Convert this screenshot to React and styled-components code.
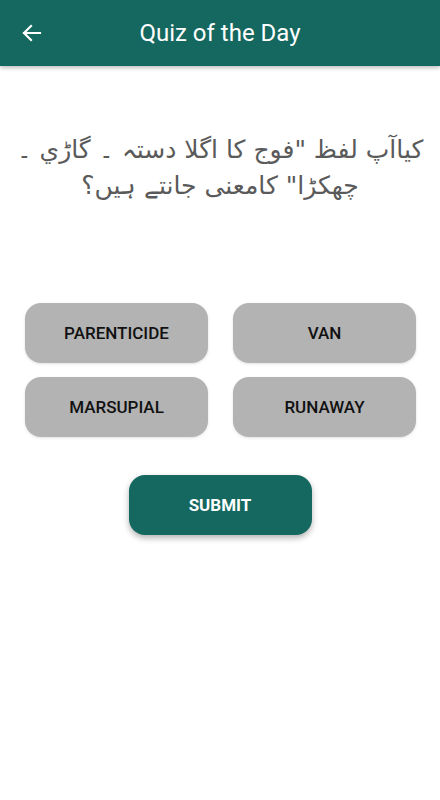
import styled, { createGlobalStyle } from 'styled-components';

const GlobalStyle = createGlobalStyle`
    html, body {
        margin: 0;
        padding: 0;
        background: #ffffff;
    }
    body {
        font-family: Roboto, "Liberation Sans", sans-serif;
    }
`;

const Screen = styled.div`
    width: 440px;
    min-height: 800px;
    display: flex;
    flex-direction: column;
    background: #ffffff;
`;

const Toolbar = styled.header`
    height: 66px;
    background: #14685f;
    display: flex;
    align-items: center;
    box-shadow: 0 2px 4px rgba(0, 0, 0, 0.25);
`;

const BackButton = styled.button`
    width: 56px;
    height: 66px;
    padding: 0 0 0 20px;
    border: none;
    background: none;
    display: flex;
    align-items: center;
    cursor: pointer;
`;

const Title = styled.h1`
    flex: 1;
    margin: 0 56px 0 0;
    text-align: center;
    color: #ffffff;
    font-size: 24px;
    font-weight: 400;
`;

const Question = styled.p`
    margin: 66px 10px 0;
    direction: rtl;
    text-align: center;
    color: #5a5a5a;
    font-family: "DejaVu Sans", "Noto Sans", sans-serif;
    font-size: 25px;
    line-height: 36px;
`;

const Options = styled.div`
    display: grid;
    grid-template-columns: 183px 183px;
    column-gap: 25px;
    row-gap: 14px;
    margin: 99px 25px 0;
`;

const OptionButton = styled.button`
    height: 60px;
    border: none;
    border-radius: 16px;
    background: ${(props) => (props.$selected ? '#8fb9b4' : '#b3b3b3')};
    color: #111111;
    font-family: Roboto, "Liberation Sans", sans-serif;
    font-size: 17px;
    font-weight: 500;
    box-shadow: 0 1px 3px rgba(0, 0, 0, 0.12);
    cursor: pointer;
`;

const SubmitRow = styled.div`
    display: flex;
    justify-content: center;
    margin-top: 38px;
`;

const SubmitButton = styled.button`
    width: 183px;
    height: 60px;
    border: none;
    border-radius: 16px;
    background: #14685f;
    color: #ffffff;
    font-family: Roboto, "Liberation Sans", sans-serif;
    font-size: 17px;
    font-weight: 700;
    box-shadow: 0 3px 6px rgba(0, 0, 0, 0.3);
    cursor: pointer;
`;

function ArrowLeft() {
    return (
        <svg width="24" height="24" viewBox="0 0 24 24" fill="none">
            <path d="M20 12H4M11 5l-7 7 7 7" stroke="#ffffff" strokeWidth="2.2" strokeLinecap="square" />
        </svg>
    );
}

const options = ['PARENTICIDE', 'VAN', 'MARSUPIAL', 'RUNAWAY'];

export default function App() {
    return (
        <Screen>
            <GlobalStyle />
            <Toolbar>
                <BackButton aria-label="Back">
                    <ArrowLeft />
                </BackButton>
                <Title>Quiz of the Day</Title>
            </Toolbar>
            <Question>کیاآپ لفظ "فوج کا اگلا دستہ ۔ گاڑي ۔ چھکڑا" کامعنی جانتے ہیں؟</Question>
            <Options>
                {options.map((opt) => (
                    <OptionButton key={opt}>{opt}</OptionButton>
                ))}
            </Options>
            <SubmitRow>
                <SubmitButton>SUBMIT</SubmitButton>
            </SubmitRow>
        </Screen>
    );
}
